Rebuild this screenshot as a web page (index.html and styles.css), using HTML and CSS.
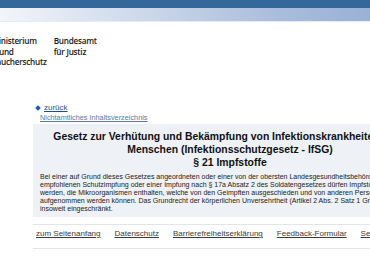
FILE: index.html
```html
<!DOCTYPE html>
<html lang="de">

<head>
  <meta charset="utf-8">
  <title>§ 21 IfSG - Einzelnorm</title>
  <link rel="stylesheet" href="styles.css">
</head>

<body>
  <div class="topbar"></div>
  <div class="subbar"></div>

  <div class="logos">
    <div class="logo logo-bmjv">Bundesministerium<br>der Justiz und<br>für Verbraucherschutz</div>
    <div class="logo logo-bfj">Bundesamt<br>für Justiz</div>
  </div>

  <div class="page">
    <div class="back">
      <span class="diamond"></span>
      <a href="#">zurück</a>
    </div>
    <div class="toc"><a href="#">Nichtamtliches Inhaltsverzeichnis</a></div>

    <div class="norm">
      <h1>Gesetz zur Verhütung und Bekämpfung von Infektionskrankheiten beim Menschen (Infektionsschutzgesetz - IfSG)<br>§ 21 Impfstoffe</h1>
      <p>Bei einer auf Grund dieses Gesetzes angeordneten oder einer von der obersten Landesgesundheitsbehörde öffentlich empfohlenen Schutzimpfung oder einer Impfung nach § 17a Absatz 2 des Soldatengesetzes dürfen Impfstoffe verwendet werden, die Mikroorganismen enthalten, welche von den Geimpften ausgeschieden und von anderen Personen aufgenommen werden können. Das Grundrecht der körperlichen Unversehrtheit (Artikel 2 Abs. 2 Satz 1 Grundgesetz) wird insoweit eingeschränkt.</p>
    </div>

    <div class="footer">
      <a href="#">zum Seitenanfang</a>
      <a href="#">Datenschutz</a>
      <a href="#">Barrierefreiheitserklärung</a>
      <a href="#">Feedback-Formular</a>
      <a href="#">Seite ausdrucken</a>
    </div>
  </div>
</body>

</html>
```

FILE: styles.css
```css
html, body {
  margin: 0;
  overflow: hidden;
  background: #fff;
}

body {
  width: 560px;
  font-family: "Liberation Sans", Arial, sans-serif;
}

.topbar {
  height: 8px;
  background: #34679a;
}

.subbar {
  height: 13px;
  background: linear-gradient(to right, #f2f5fa, #a9bcdb 50%, #7b9bcc);
  border-bottom: 1px solid #e4ebf5;
}

.logos {
  display: flex;
  gap: 7px;
  padding-top: 14px;
  height: 80px;
  box-sizing: border-box;
}

.logo {
  font-family: "Open Sans", "DejaVu Sans", sans-serif;
  font-size: 8.2px;
  font-weight: 600;
  letter-spacing: -0.25px;
  line-height: 10.5px;
  color: #1a1a1a;
}

.logo-bmjv {
  margin-left: -37px;
}

.page {
  margin-left: 33px;
  width: 394px;
}

.back {
  display: flex;
  align-items: center;
  gap: 4px;
  padding-left: 3px;
  font-size: 8px;
  line-height: 11px;
}

.diamond {
  width: 4px;
  height: 4px;
  background: #1d5bab;
  transform: rotate(45deg);
}

a {
  color: #3a3a3a;
}

.back a {
  color: #1c4f8f;
}

.toc {
  padding-left: 7px;
  font-size: 7.3px;
  line-height: 10px;
}

.toc a {
  color: #5b7aa3;
}

.norm {
  background: #eef1f5;
  margin-top: 1px;
  padding: 6px 7px 4px;
}

h1 {
  margin: 0 0 4px;
  font-size: 10.4px;
  line-height: 13px;
  text-align: center;
  color: #111;
}

.norm p {
  margin: 0;
  font-size: 7px;
  line-height: 8px;
  color: #222;
}

.footer {
  display: flex;
  gap: 14px;
  margin-top: 7px;
  padding: 3px 3px 9px;
  border-top: 1px solid #e2e5e9;
  border-bottom: 1px solid #e2e5e9;
  font-size: 8px;
  line-height: 11px;
  white-space: nowrap;
}
```
